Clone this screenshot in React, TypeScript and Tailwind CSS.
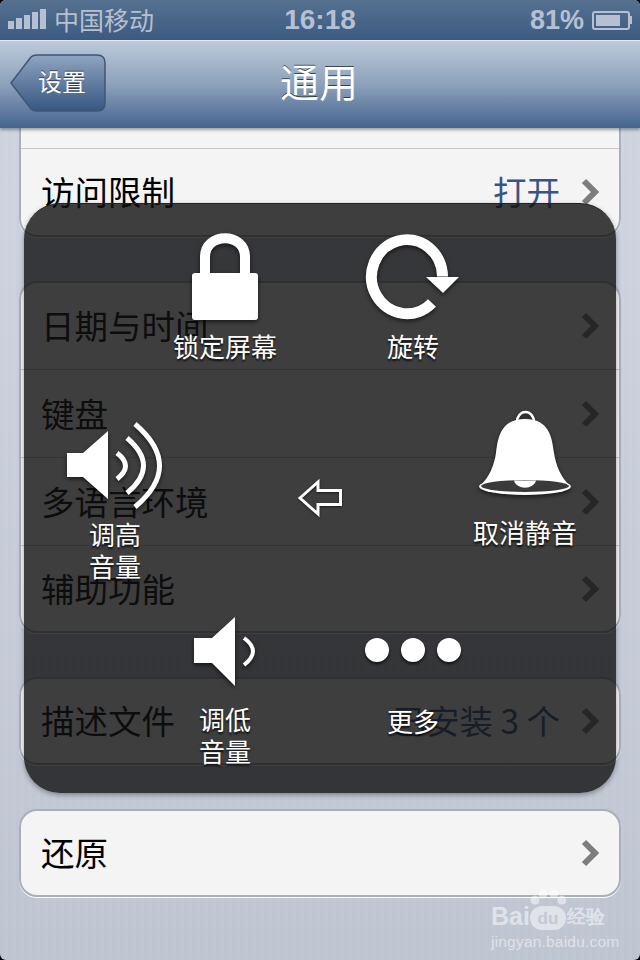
import type { ReactNode } from 'react'

const cjk = "font-['Noto_Sans_CJK_SC','Liberation_Sans',sans-serif]"

function Chevron({ color = '#7d7d7d' }: { color?: string }) {
    return (
        <svg width="18" height="28" viewBox="0 0 18 28" className="shrink-0">
            <path d="M3 3 L14 14 L3 25" fill="none" stroke={color} strokeWidth="6" />
        </svg>
    )
}

function Row({ title, value, className = 'h-[84px]' }: { title: string; value?: string; className?: string }) {
    return (
        <div className={`flex items-center pl-[20px] pr-[20px] ${className}`}>
            <span className="flex-1 pb-[2px] text-[33.5px] leading-none text-black">{title}</span>
            {value && <span className="mr-[21px] pb-[2px] text-[33.5px] leading-none text-[#385487]">{value}</span>}
            <Chevron />
        </div>
    )
}

function Group({ children, className = '' }: { children: ReactNode; className?: string }) {
    return (
        <div className={`mx-[19px] overflow-hidden rounded-[18px] border-2 border-[#a9aeba] bg-[#f4f4f4] shadow-[0_1px_0_#ffffff] ${className}`}>
            {children}
        </div>
    )
}

function Item({ icon, label, top = 0 }: { icon: ReactNode; label: ReactNode; top?: number }) {
    return (
        <div className="flex w-[120px] flex-col items-center text-center text-[26px] leading-[32px] text-white [text-shadow:0_2px_2px_rgba(0,0,0,0.8)]" style={{ paddingTop: top }}>
            {icon}
            {label}
        </div>
    )
}

function LockIcon() {
    return (
        <svg width="70" height="87" viewBox="0 0 70 87" className="drop-shadow-[0_2px_2px_rgba(0,0,0,0.6)]">
            <path d="M15 42 V24 C15 -1 55 -1 55 24 V42" fill="none" stroke="#fff" strokeWidth="10" />
            <rect x="2" y="40" width="66" height="47" rx="3" fill="#fff" />
        </svg>
    )
}

function RotateIcon() {
    return (
        <svg width="96" height="87" viewBox="366 232 96 87" className="drop-shadow-[0_2px_2px_rgba(0,0,0,0.6)]">
            <path d="M443.5 275.5 A35.5 37 0 1 0 433 302" fill="none" stroke="#fff" strokeWidth="11" />
            <path d="M427 276 H460 L444 292 Z" fill="#fff" />
        </svg>
    )
}

function SpeakerHighIcon() {
    return (
        <svg width="100" height="89" viewBox="65 421 100 89" className="drop-shadow-[0_2px_2px_rgba(0,0,0,0.6)]">
            <path d="M67 453 H83 L108 431 V499 L83 477 H67 Z" fill="#fff" />
            <g fill="none" stroke="#fff" strokeWidth="5">
                <path d="M117 453 Q134 466 117 479" />
                <path d="M127 438 Q160 466 127 493" />
                <path d="M135 424 Q184 466 135 507" />
            </g>
        </svg>
    )
}

function SpeakerLowIcon() {
    return (
        <svg width="66" height="70" viewBox="192 617 66 70" className="drop-shadow-[0_2px_2px_rgba(0,0,0,0.6)]">
            <path d="M194 638 H212 L235 617 V686 L212 663 H194 Z" fill="#fff" />
            <path d="M244 638 Q262 651 244 665" fill="none" stroke="#fff" strokeWidth="4" />
        </svg>
    )
}

function BellIcon() {
    return (
        <svg width="94" height="86" viewBox="477 409 94 86" className="drop-shadow-[0_2px_2px_rgba(0,0,0,0.6)]">
            <path d="M516 421 A8.5 10 0 0 1 533 421" fill="none" stroke="#fff" strokeWidth="2.5" />
            <ellipse cx="524" cy="485.5" rx="46" ry="8.5" fill="#fff" />
            <path d="M480 484 C488 476 493 465 495 452 C497 436 500 418 524 418 C548 418 551 436 553 452 C555 465 560 476 568 484 Z" fill="#fff" />
            <ellipse cx="524" cy="485" rx="44" ry="6" fill="#3a3a3a" />
            <path d="M513 479.5 H535 C533 489 515 489 513 479.5 Z" fill="#fff" />
        </svg>
    )
}

function BackArrowIcon() {
    return (
        <svg width="46" height="40" viewBox="298 478 46 40" className="drop-shadow-[0_1px_1px_rgba(0,0,0,0.6)]">
            <path d="M301 498 L319 482 V490.5 H341.5 V504.5 H319 V514 Z" fill="none" stroke="#fff" strokeWidth="3" />
        </svg>
    )
}

function Dots() {
    return (
        <div className="flex h-[66px] items-center gap-[12px]">
            <div className="h-[24px] w-[24px] rounded-full bg-white shadow-[0_2px_3px_rgba(0,0,0,0.7)]" />
            <div className="h-[24px] w-[24px] rounded-full bg-white shadow-[0_2px_3px_rgba(0,0,0,0.7)]" />
            <div className="h-[24px] w-[24px] rounded-full bg-white shadow-[0_2px_3px_rgba(0,0,0,0.7)]" />
        </div>
    )
}

function Overlay() {
    return (
        <div className="absolute left-[24px] top-[203px] flex h-[590px] w-[592px] flex-col items-center rounded-[36px] border-t border-[#222222] bg-[rgba(16,16,16,0.8)] pt-[29px] shadow-[0_2px_5px_rgba(0,0,0,0.35)]">
            <div className="flex justify-center gap-[68px] pr-[2px]">
                <Item icon={<LockIcon />} label={<span className="mt-[10px] whitespace-nowrap">锁定屏幕</span>} />
                <Item icon={<RotateIcon />} label={<span className="mt-[10px] whitespace-nowrap">旋转</span>} />
            </div>
            <div className="mt-[48px] flex justify-center gap-[85px]">
                <Item top={11} icon={<SpeakerHighIcon />} label={<span className="mt-[8px]">调高<br />音量</span>} />
                <div className="flex w-[120px] justify-center pt-[68px]">
                    <BackArrowIcon />
                </div>
                <Item icon={<BellIcon />} label={<span className="mt-[20px] whitespace-nowrap">取消静音</span>} />
            </div>
            <div className="mt-[35px] flex justify-center gap-[68px] pr-[2px]">
                <Item icon={<SpeakerLowIcon />} label={<span className="mt-[16px]">调低<br />音量</span>} />
                <Item icon={<Dots />} label={<span className="mt-[22px]">更多</span>} />
            </div>
        </div>
    )
}

function StatusBar() {
    return (
        <div className="grid h-[40px] grid-cols-[1fr_auto_1fr] items-center bg-gradient-to-b from-[#56718f] to-[#3c5a82] px-[8px] text-[#b5c1d2]">
            <div className="flex items-center gap-[8px]">
                <div className="mb-[2px] flex items-end gap-[2px]">
                    <div className="h-[8px] w-[6px] bg-[#b5c1d2]" />
                    <div className="h-[11px] w-[6px] bg-[#b5c1d2]" />
                    <div className="h-[14px] w-[6px] bg-[#b5c1d2]" />
                    <div className="h-[17px] w-[6px] bg-[#b5c1d2]" />
                    <div className="h-[20px] w-[6px] bg-[#b5c1d2]" />
                </div>
                <span className="pb-[2px] text-[25px] leading-none">中国移动</span>
            </div>
            <span className="font-['Liberation_Sans',sans-serif] text-[28px] font-bold leading-none">16:18</span>
            <div className="flex items-center justify-end gap-[8px]">
                <span className="font-['Liberation_Sans',sans-serif] text-[27px] font-bold leading-none">81%</span>
                <div className="flex items-center">
                    <div className="h-[19px] w-[38px] rounded-[3px] border-2 border-[#b5c1d2] p-[2px]">
                        <div className="h-full w-[81%] bg-[#b5c1d2]" />
                    </div>
                    <div className="h-[8px] w-[2px] bg-[#b5c1d2]" />
                </div>
            </div>
        </div>
    )
}

function NavBar() {
    return (
        <div className="relative z-10 grid h-[88px] grid-cols-[1fr_auto_1fr] items-center border-t border-[#e4e9f0] bg-gradient-to-b from-[#bccada] via-[#8da1bb] to-[#45658f] px-[10px] pb-[4px] shadow-[0_2px_3px_rgba(0,0,0,0.35)]">
            <div className="relative flex h-[58px] w-[96px] items-center justify-end pb-[4px] pr-[20px]">
                <svg width="96" height="58" viewBox="0 0 96 58" className="absolute left-0 top-0">
                    <defs>
                        <linearGradient id="back" x1="0" y1="0" x2="0" y2="1">
                            <stop offset="0" stopColor="#8fa4bf" />
                            <stop offset="1" stopColor="#365682" />
                        </linearGradient>
                    </defs>
                    <path d="M1 29 L21 3 Q23 1 27 1 H87 Q95 1 95 9 V49 Q95 57 87 57 H27 Q23 57 21 55 Z" fill="url(#back)" stroke="#3f5673" strokeWidth="1.5" />
                </svg>
                <span className="relative text-[24px] leading-none text-white [text-shadow:0_-1px_0_rgba(0,0,0,0.5)]">设置</span>
            </div>
            <span className="mb-[4px] mr-[2px] text-[39px] leading-none text-white [text-shadow:0_-1px_0_rgba(0,0,0,0.6)]">通用</span>
            <div />
        </div>
    )
}

function Watermark() {
    return (
        <div className="absolute left-[491px] top-[891px] flex w-[118px] flex-col text-white/50">
            <div className="flex h-[40px] items-end font-['Liberation_Sans',sans-serif]">
                <span className="text-[25px] font-bold leading-[30px]">Bai</span>
                <div className="relative mb-[1px] flex h-[24px] w-[36px] items-center justify-center rounded-[12px] bg-white/50">
                    <svg width="36" height="17" viewBox="0 0 36 17" className="absolute -top-[17px] left-0">
                        <circle cx="5" cy="11" r="4.5" fill="currentColor" />
                        <circle cx="13" cy="5" r="4.5" fill="currentColor" />
                        <circle cx="24" cy="5" r="4.5" fill="currentColor" />
                        <circle cx="32" cy="11" r="4.5" fill="currentColor" />
                    </svg>
                    <span className="text-[17px] font-bold leading-none text-[#c3c8d5]">du</span>
                </div>
                <span className="ml-[1px] whitespace-nowrap text-[19px] font-bold leading-[28px]">经验</span>
            </div>
            <span className="mt-[2px] font-['Liberation_Sans',sans-serif] text-[15.5px] leading-[18px] tracking-[0.2px]">jingyan.baidu.com</span>
        </div>
    )
}

export default function App() {
    return (
        <div className={`h-[960px] w-[640px] bg-black ${cjk}`}>
            <div className="relative flex h-full w-full flex-col overflow-hidden rounded-[6px] bg-[repeating-linear-gradient(90deg,rgba(0,0,0,0.012)_0,rgba(0,0,0,0.012)_4px,transparent_4px,transparent_8px),linear-gradient(#d2d7e3,#c1c6d3)]">
                <StatusBar />
                <NavBar />
                <div className="flex flex-col gap-[44px]">
                    <Group className="rounded-t-none border-t-0">
                        <div className="h-[21px] border-b border-[#c8c8c8]" />
                        <Row title="访问限制" value="打开" className="h-[86px]" />
                    </Group>
                    <Group className="divide-y divide-[#c8c8c8]">
                        <Row title="日期与时间" className="h-[87px]" />
                        <Row title="键盘" className="h-[88px]" />
                        <Row title="多语言环境" className="h-[88px]" />
                        <Row title="辅助功能" className="h-[85px]" />
                    </Group>
                    <Group>
                        <Row title="描述文件" value="已安装 3 个" />
                    </Group>
                    <Group>
                        <Row title="还原" />
                    </Group>
                </div>
                <Overlay />
                <Watermark />
            </div>
        </div>
    )
}
